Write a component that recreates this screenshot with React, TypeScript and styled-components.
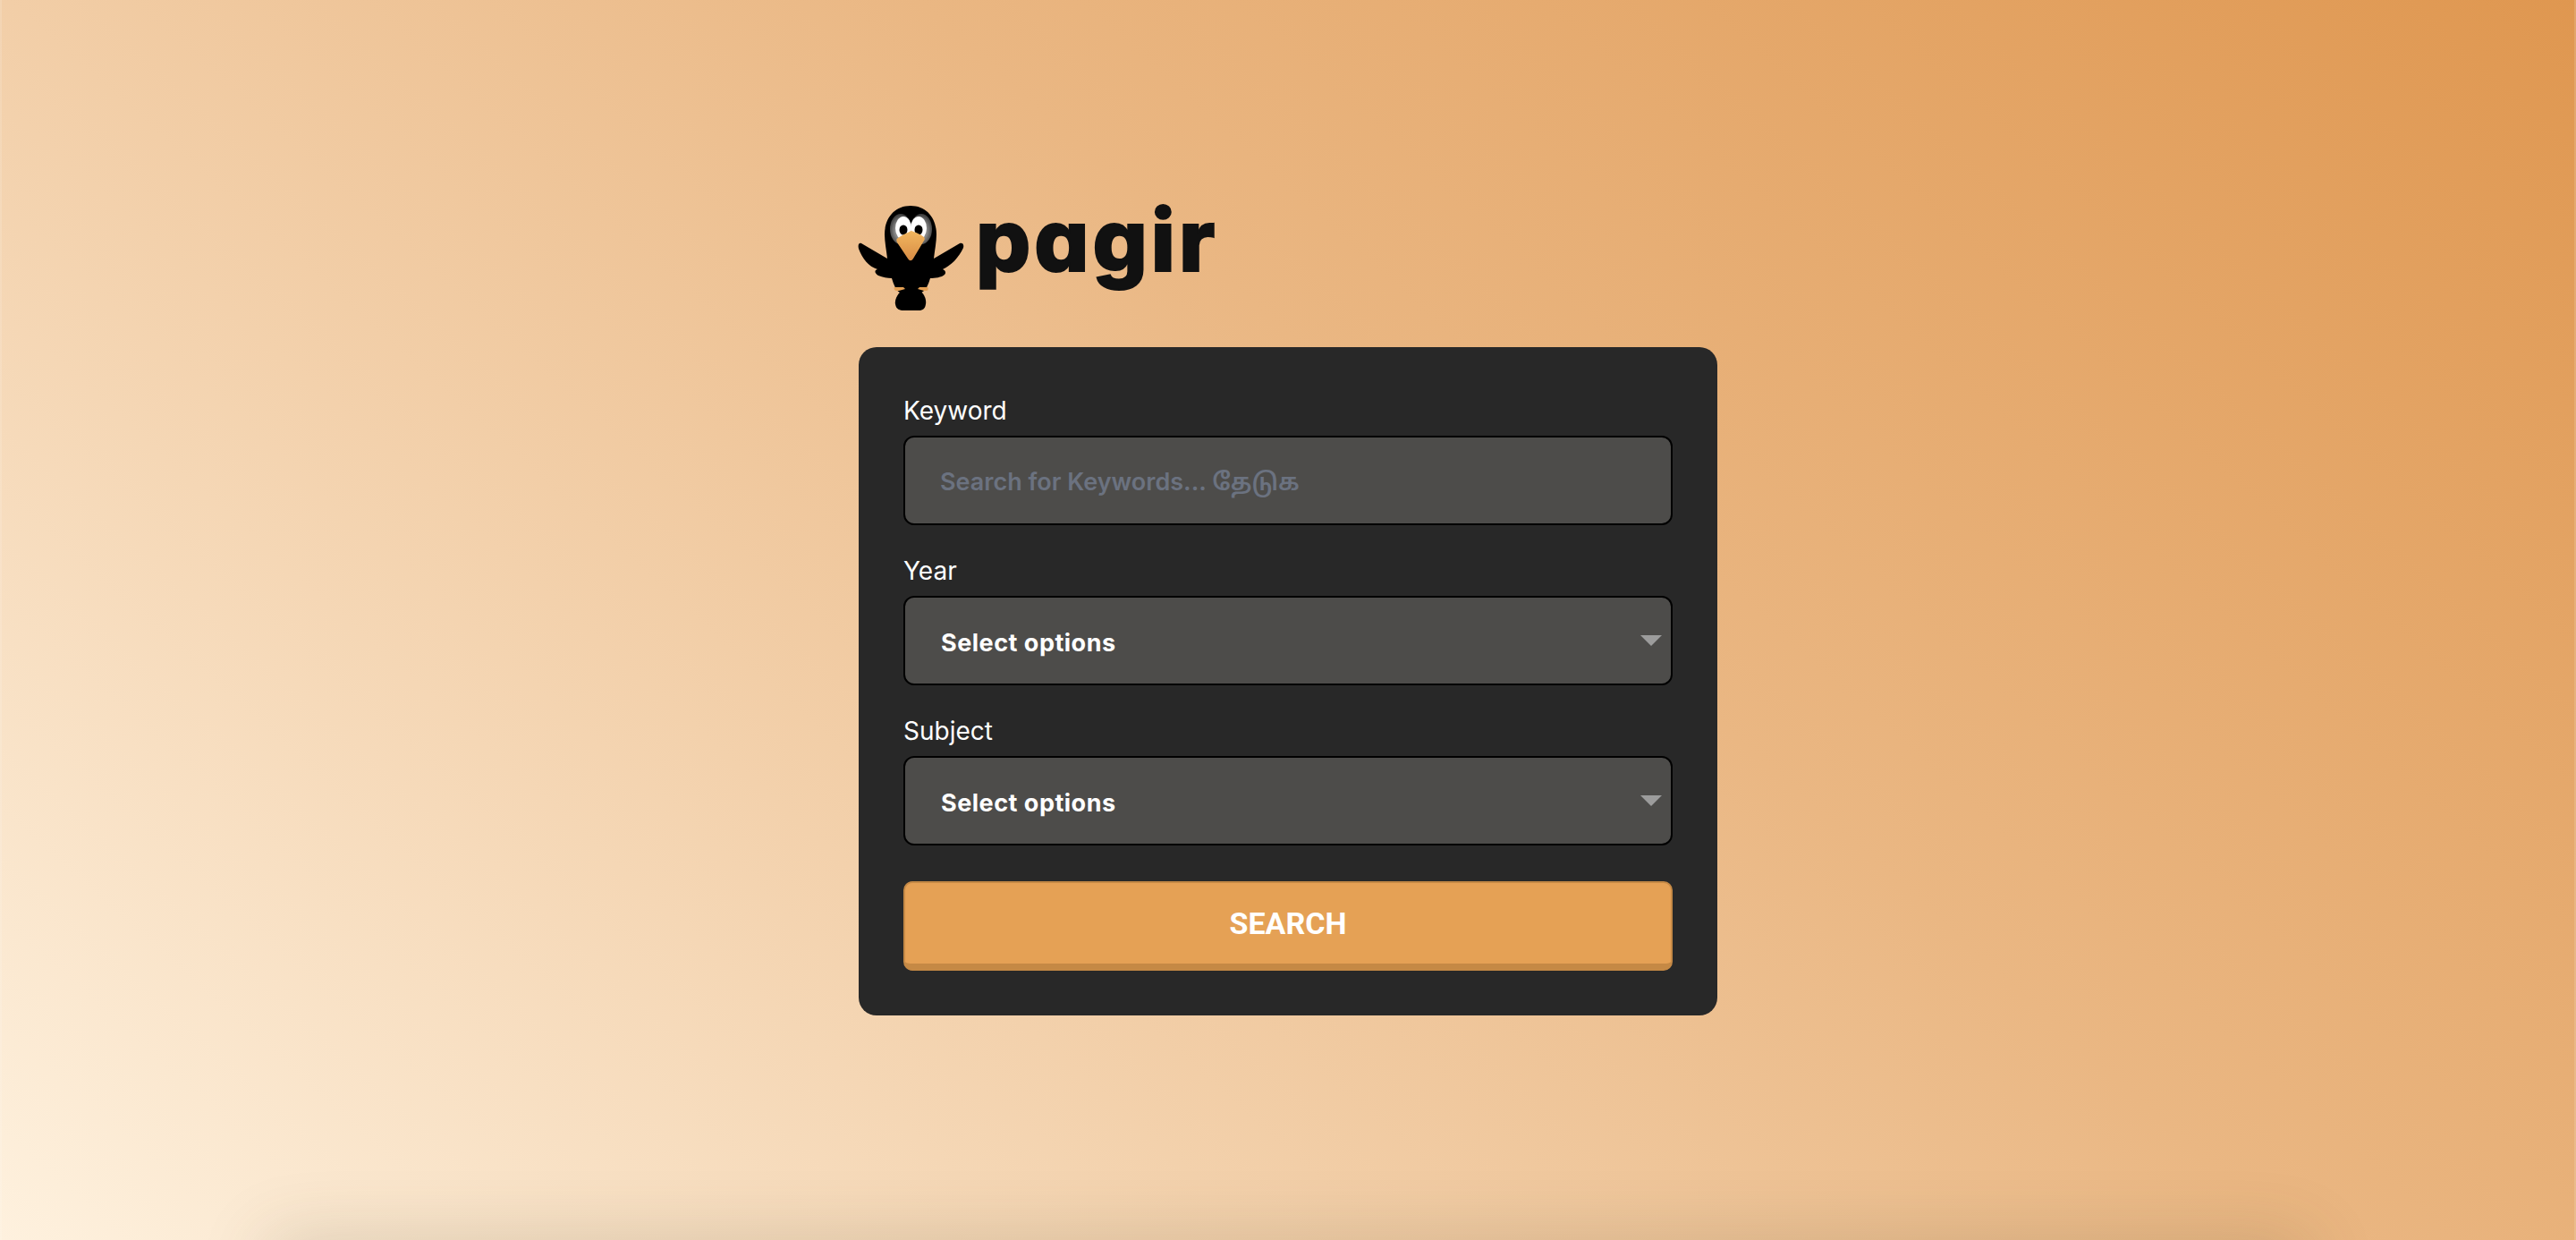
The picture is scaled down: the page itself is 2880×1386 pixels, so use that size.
import styled, { createGlobalStyle } from "styled-components";

const GlobalStyle = createGlobalStyle`
  html, body {
    margin: 0;
    padding: 0;
  }
  * {
    box-sizing: border-box;
  }
`;

const Page = styled.main`
  position: relative;
  display: flex;
  flex-direction: column;
  align-items: center;
  height: 1386px;
  padding-top: 215px;
  overflow: hidden;
  font-family: Inter, "Noto Sans", sans-serif;
  background: linear-gradient(42deg, #fef1de 0%, #eab783 58%, #df9750 100%);
  box-shadow: inset 2px 0 0 rgba(255, 255, 255, 0.14), inset -2px 0 0 rgba(255, 255, 255, 0.14);

  &::after {
    content: "";
    position: absolute;
    left: 300px;
    right: 300px;
    bottom: -70px;
    height: 70px;
    box-shadow: 0 0 80px rgba(80, 70, 40, 0.2);
  }
`;

const Column = styled.div`
  display: flex;
  flex-direction: column;
  width: 960px;
`;

const Logo = styled.div`
  display: flex;
  align-items: flex-start;
  height: 173px;
`;

const Bird = styled.svg`
  width: 130px;
  height: 140px;
  margin-left: -10px;
  flex: none;
`;

const Wordmark = styled.span`
  margin-left: 11px;
  font-family: Inter, sans-serif;
  font-size: 96px;
  line-height: 106px;
  font-weight: 800;
  letter-spacing: 4px;
  color: #111111;
  font-feature-settings: "cv11" 1;
  -webkit-text-stroke: 2px #111111;
`;

const Card = styled.form`
  display: flex;
  flex-direction: column;
  padding: 50px;
  background: #282828;
  border-radius: 20px;
`;

const Field = styled.div`
  display: flex;
  flex-direction: column;
  margin-bottom: 30px;
`;

const Label = styled.label`
  margin: 3px 0 10px;
  font-size: 28px;
  line-height: 36px;
  color: #ffffff;
`;

const TextInput = styled.input`
  width: 100%;
  height: 100px;
  padding: 3px 39px 0;
  background: #4d4c4a;
  border: 2px solid #000000;
  border-radius: 12px;
  outline: none;
  font-family: Inter, "Noto Sans Tamil", "Noto Sans", sans-serif;
  font-size: 27px;
  font-weight: 600;
  color: #ffffff;

  &::placeholder {
    color: #6b7280;
    opacity: 1;
  }
`;

const SelectWrap = styled.div`
  position: relative;

  &::after {
    content: "";
    position: absolute;
    top: 44px;
    right: 12px;
    border-left: 12px solid transparent;
    border-right: 12px solid transparent;
    border-top: 12px solid #9c9c9c;
    pointer-events: none;
  }
`;

const Select = styled.select`
  display: block;
  width: 100%;
  height: 100px;
  padding: 5px 40px 0;
  appearance: none;
  background: #4d4c4a;
  border: 2px solid #000000;
  border-radius: 12px;
  outline: none;
  font-family: Inter, sans-serif;
  font-size: 27px;
  font-weight: 700;
  letter-spacing: 0.5px;
  color: #ffffff;
`;

const SearchButton = styled.button`
  height: 100px;
  margin-top: 10px;
  padding: 0;
  background: #e5a155;
  border-style: solid;
  border-color: #c58945;
  border-width: 2px 2px 8px;
  border-radius: 10px;
  font-family: Roboto, sans-serif;
  font-size: 34px;
  font-weight: 700;
  color: #ffffff;
`;

const BirdMark = () => (
  <Bird viewBox="0 0 130 140" aria-hidden="true">
    <defs>
      <linearGradient id="beak" x1="0" y1="0" x2="0" y2="1">
        <stop offset="0" stopColor="#f2b75f" />
        <stop offset="1" stopColor="#d88c45" />
      </linearGradient>
      <radialGradient id="patch" cx="0.5" cy="0.55" r="0.6">
        <stop offset="0.45" stopColor="#8a8a8a" />
        <stop offset="1" stopColor="#2a2a2a" />
      </radialGradient>
    </defs>
    <path
      d="M68 15C50 15 39 29 39 47C39 55 41 65 42 74L13 57C10 56 9 59 10 63C14 74 21 83 31 86C27 87 28 91 32 93C37 95 42 96 47 96C49 103 52 110 56 112H80C85 110 88 103 90 96C95 96 103 95 106 92C108 90 107 87 104 86C113 82 122 73 127 62C128 58 126 56 123 57L94 74C95 65 97 55 97 47C97 29 86 15 68 15Z"
      fill="#000000"
    />
    <path d="M60 108H77C83 113 86 119 85 125C84 131 81 132 77 132H60C56 132 52 131 51 125C50 119 54 113 60 108Z" fill="#000000" />
    <path d="M50 106H60L62 108L55 110H52C50 110 49 107 50 106Z" fill="#e5a155" />
    <path d="M76 108L78 106H87C88 107 88 110 86 110H83Z" fill="#e5a155" />
    <ellipse cx="57" cy="41" rx="12" ry="17" fill="url(#patch)" />
    <ellipse cx="80" cy="41" rx="12" ry="17" fill="url(#patch)" />
    <ellipse cx="60" cy="40" rx="9" ry="13" fill="#ffffff" />
    <ellipse cx="77" cy="40" rx="9" ry="13" fill="#ffffff" />
    <ellipse cx="60" cy="42" rx="4.5" ry="5.5" fill="#000000" />
    <ellipse cx="77" cy="42" rx="4.5" ry="5.5" fill="#000000" />
    <path d="M69 43C74 45 80 47 83 50C84 51 84 53 83 54L71 74C69 77 67 77 65 74L53 56C52 54 52 52 54 51C58 48 64 45 69 43Z" fill="url(#beak)" />
  </Bird>
);

export default function App() {
  return (
    <>
      <GlobalStyle />
      <Page>
        <Column>
          <Logo>
            <BirdMark />
            <Wordmark>pagir</Wordmark>
          </Logo>
          <Card onSubmit={(e) => e.preventDefault()}>
            <Field>
              <Label htmlFor="keyword">Keyword</Label>
              <TextInput id="keyword" placeholder="Search for Keywords... தேடுக" />
            </Field>
            <Field>
              <Label htmlFor="year">Year</Label>
              <SelectWrap>
                <Select id="year">
                  <option>Select options</option>
                </Select>
              </SelectWrap>
            </Field>
            <Field>
              <Label htmlFor="subject">Subject</Label>
              <SelectWrap>
                <Select id="subject">
                  <option>Select options</option>
                </Select>
              </SelectWrap>
            </Field>
            <SearchButton type="submit">SEARCH</SearchButton>
          </Card>
        </Column>
      </Page>
    </>
  );
}
